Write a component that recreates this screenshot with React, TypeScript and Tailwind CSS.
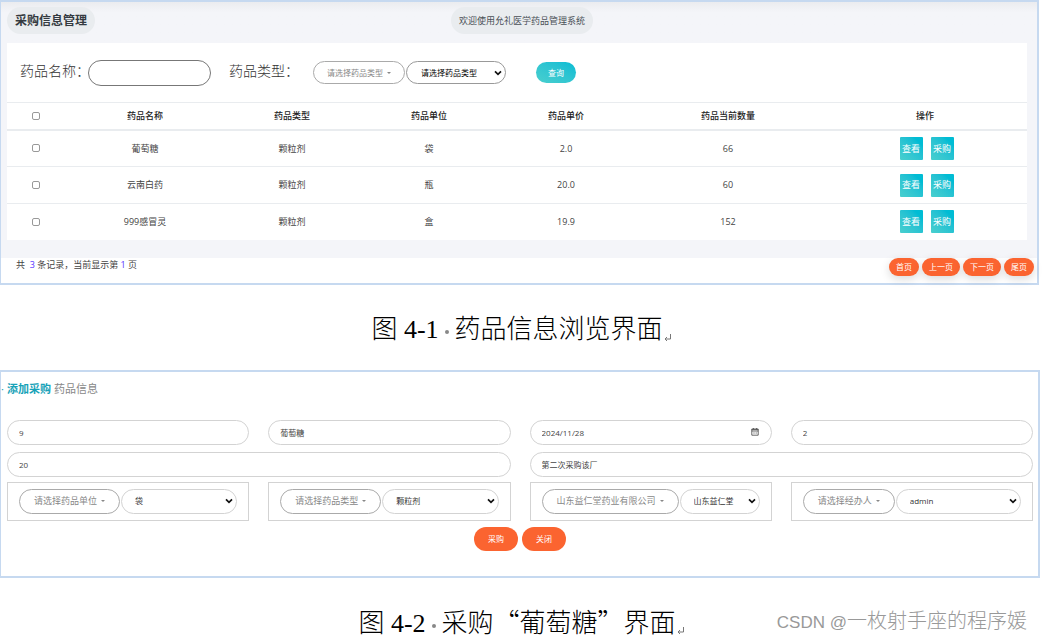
import type { ReactNode } from 'react';

const drugs = [
  { name: '葡萄糖', type: '颗粒剂', unit: '袋', price: '2.0', count: '66' },
  { name: '云南白药', type: '颗粒剂', unit: '瓶', price: '20.0', count: '60' },
  { name: '999感冒灵', type: '颗粒剂', unit: '盒', price: '19.9', count: '152' },
];

const columns = ['药品名称', '药品类型', '药品单位', '药品单价', '药品当前数量', '操作'];

const fieldClass =
  'block h-[25px] w-full rounded-full border border-[#d3d3d3] bg-white px-[11px] text-[8px] text-[#444]';

function Chevron() {
  return (
    <svg
      className="pointer-events-none absolute top-1/2 right-1 h-2 w-2 -translate-y-1/2"
      viewBox="0 0 8 8"
      fill="none"
      stroke="#111"
      strokeWidth="1.7"
    >
      <path d="M1 2.4 4 5.4 7 2.4" />
    </svg>
  );
}

function PillSelect({ label, options, className }: { label: string; options: string[]; className: string }) {
  return (
    <div className="relative min-w-0 flex-1">
      <select
        aria-label={label}
        className={`block w-full appearance-none rounded-full border bg-white pr-4 text-[8px] ${className}`}
      >
        {options.map((o) => (
          <option key={o}>{o}</option>
        ))}
      </select>
      <Chevron />
    </div>
  );
}

function DropdownButton({ children, className }: { children: ReactNode; className: string }) {
  return (
    <button
      type="button"
      className={`flex shrink-0 items-center gap-[4px] rounded-full border border-[#aaa] bg-white whitespace-nowrap text-[#888] ${className}`}
    >
      {children}
      <span className="border-x-2 border-t-2 border-x-transparent border-t-[#888]" />
    </button>
  );
}

function SelectBox({ label, option }: { label: string; option: string }) {
  return (
    <div className="flex gap-px border border-[#d3d3d3] px-[11px] py-[6px]">
      <DropdownButton className="h-[25px] px-[14px] text-[9px]">{label}</DropdownButton>
      <PillSelect label={label} options={[option]} className="h-[25px] border-[#d3d3d3] pl-[13px] text-[#333]" />
    </div>
  );
}

function Caption({ children }: { children: ReactNode }) {
  return (
    <p className="flex h-8 items-center justify-center font-['Liberation_Serif','Noto_Sans_CJK_SC',serif] text-[26px] leading-8 font-light text-black">
      <span>{children}</span>
      <svg className="mt-4 ml-px h-2 w-[7px]" viewBox="0 0 7 8" fill="none" stroke="#777" strokeWidth="1">
        <path d="M6.5 0v5H1M3 3 1 5l2 2" />
      </svg>
    </p>
  );
}

function Dot() {
  return <span className="mx-[6px] inline-block size-1 rounded-full bg-[#888] align-middle" />;
}

function PurchaseList() {
  return (
    <section className="mr-[3px] border-2 border-l border-[#c6d9f0] bg-[#f4f5f9]">
      <div className="bg-linear-to-b from-[#ebecef] to-[#f4f5f9] to-25% pt-[5px] pl-[6px]">
        <header className="grid grid-cols-3 items-center pb-[9px]">
          <h1 className="justify-self-start rounded-full bg-[#e9ecef] px-2 text-[12px] leading-[27px] font-bold text-[#343a40]">
            采购信息管理
          </h1>
          <p className="justify-self-center rounded-full bg-[#e9ecef] px-2 text-[9px] leading-[27px] text-[#495057]">
            欢迎使用允礼医学药品管理系统
          </p>
        </header>
      </div>

      <div className="mr-[10px] ml-[6px] bg-white">
        <form className="flex h-[59px] items-center pl-[13px]">
          <label htmlFor="name" className="w-[68px] pb-1 text-[14px] font-light whitespace-nowrap text-[#333]">
            药品名称：
          </label>
          <input id="name" className="h-[26px] w-[123px] rounded-full border border-[#777] bg-white px-3 text-[9px]" />
          <span className="ml-[18px] w-[84px] pb-1 text-[14px] font-light whitespace-nowrap text-[#333]">
            药品类型：
          </span>
          <DropdownButton className="h-[23px] px-[13px] text-[8px]">请选择药品类型</DropdownButton>
          <div className="ml-px flex w-[100px]">
            <PillSelect
              label="药品类型"
              options={['请选择药品类型', '颗粒剂']}
              className="h-[23px] border-[#999] pl-[14px] text-black"
            />
          </div>
          <button
            type="button"
            className="ml-[30px] h-[21px] w-[40px] rounded-full bg-linear-to-tr from-[#48cfce] to-[#00bcd4] text-[8px] text-white"
          >
            查询
          </button>
        </form>

        <table className="w-full table-fixed border-t border-[#e9ecef] text-center text-[9px] text-[#444]">
          <colgroup>
            <col className="w-[58px]" />
            <col className="w-[160px]" />
            <col className="w-[134px]" />
            <col className="w-[140px]" />
            <col className="w-[134px]" />
            <col className="w-[190px]" />
            <col className="w-[204px]" />
          </colgroup>
          <thead>
            <tr className="h-[27px] border-b-2 border-[#e9ecef] text-[#222]">
              <th>
                <input
                  type="checkbox"
                  aria-label="全选"
                  className="mx-auto block size-2 appearance-none rounded-[2px] border border-[#999] bg-white checked:bg-[#00bcd4]"
                />
              </th>
              {columns.map((c) => (
                <th key={c} className="font-medium">
                  {c}
                </th>
              ))}
            </tr>
          </thead>
          <tbody>
            {drugs.map((d) => (
              <tr key={d.name} className="h-[37px] border-b border-[#e9ecef] last:h-[36px] last:border-b-0">
                <td>
                  <input
                    type="checkbox"
                    aria-label={d.name}
                    className="mx-auto block size-2 appearance-none rounded-[2px] border border-[#999] bg-white checked:bg-[#00bcd4]"
                  />
                </td>
                <td>{d.name}</td>
                <td>{d.type}</td>
                <td>{d.unit}</td>
                <td>{d.price}</td>
                <td>{d.count}</td>
                <td>
                  <div className="flex justify-center gap-2 pl-[3px]">
                    {['查看', '采购'].map((a) => (
                      <button
                        key={a}
                        type="button"
                        className="size-[23px] rounded-[1px] bg-linear-to-tr from-[#48cfce] to-[#00bcd4] to-80% text-[9px] whitespace-nowrap text-white"
                      >
                        {a}
                      </button>
                    ))}
                  </div>
                </td>
              </tr>
            ))}
          </tbody>
        </table>
      </div>

      <footer className="mt-[18px] flex h-[25px] items-start justify-between bg-white pr-[3px] pl-[15px]">
        <p className="text-[9px] leading-[13px] text-[#444]">
          共&nbsp; <span className="text-[#5a35ff]">3</span> 条记录，当前显示第 <span className="text-[#5a35ff]">1</span> 页
        </p>
        <nav className="flex gap-[3px]">
          {['首页', '上一页', '下一页', '尾页'].map((p) => (
            <a
              key={p}
              href="#"
              className="rounded-full bg-[#fb6430] px-[7px] text-[8px] leading-[18px] text-white shadow-[0_3px_10px_rgba(0,0,0,0.15)]"
            >
              {p}
            </a>
          ))}
        </nav>
      </footer>
    </section>
  );
}

function PurchaseForm() {
  return (
    <section className="mr-[2px] border-2 border-l border-[#c6d9f0] bg-white pr-[5px] pb-[25px]">
      <h2 className="flex pt-[9px] text-[11px] leading-4 text-[#888]">
        <span className="w-[6px] text-[#17a2b8]">·</span>
        <b className="mr-[3px] font-bold text-[#17a2b8]">添加采购</b>药品信息
      </h2>
      <form className="pt-[23px] pl-[6px]">
        <div className="grid grid-cols-4 gap-x-[19px]">
          <input aria-label="编号" defaultValue="9" className={fieldClass} />
          <input aria-label="药品名称" defaultValue="葡萄糖" className={fieldClass} />
          <div className="relative">
            <input aria-label="采购日期" defaultValue="2024/11/28" className={fieldClass} />
            <svg
              className="pointer-events-none absolute top-2 right-[13px] size-2"
              viewBox="0 0 8 8"
              fill="none"
              stroke="#555"
              strokeWidth="0.9"
            >
              <path d="M.8 1h6.4v6.2H.8zM.8 1.6h6.4M.8 3h6.4M2.4 0v1.5M5.6 0v1.5M2.4 5h1.2M4.6 5h1.2" />
            </svg>
          </div>
          <input aria-label="单价" defaultValue="2" className={fieldClass} />
        </div>
        <div className="grid grid-cols-2 gap-x-[19px] pt-[7px] pb-[5px]">
          <input aria-label="数量" defaultValue="20" className={fieldClass} />
          <input aria-label="备注" defaultValue="第二次采购该厂" className={fieldClass} />
        </div>
        <div className="grid grid-cols-4 gap-x-[19px]">
          <SelectBox label="请选择药品单位" option="袋" />
          <SelectBox label="请选择药品类型" option="颗粒剂" />
          <SelectBox label="山东益仁堂药业有限公司" option="山东益仁堂" />
          <SelectBox label="请选择经办人" option="admin" />
        </div>
        <div className="flex justify-center gap-[4px] pt-[6px]">
          <button type="button" className="h-6 w-11 rounded-full bg-[#fb6430] text-[8px] text-white">
            采购
          </button>
          <button type="button" className="h-6 w-11 rounded-full bg-[#fb6430] text-[8px] text-white">
            关闭
          </button>
        </div>
      </form>
    </section>
  );
}

export default function App() {
  return (
    <main className="bg-white font-['Open_Sans','Noto_Sans_CJK_SC',sans-serif]">
      <PurchaseList />
      <div className="pt-[29px] pb-[24px]">
        <Caption>
          图 4-1
          <Dot />
          药品信息浏览界面
        </Caption>
      </div>
      <PurchaseForm />
      <div className="relative pt-[29px]">
        <Caption>
          图 4-2
          <Dot />
          <span className="font-['Noto_Sans_CJK_SC',sans-serif]" lang="zh-CN">
            采购“葡萄糖”界面
          </span>
        </Caption>
        <p className="absolute top-[29px] right-[15px] font-['Liberation_Sans','Noto_Sans_CJK_SC',sans-serif] text-[17px] leading-[28px] font-light text-[#999]">
          CSDN @<span className="text-[20px]">一枚射手座的程序媛</span>
        </p>
      </div>
    </main>
  );
}
